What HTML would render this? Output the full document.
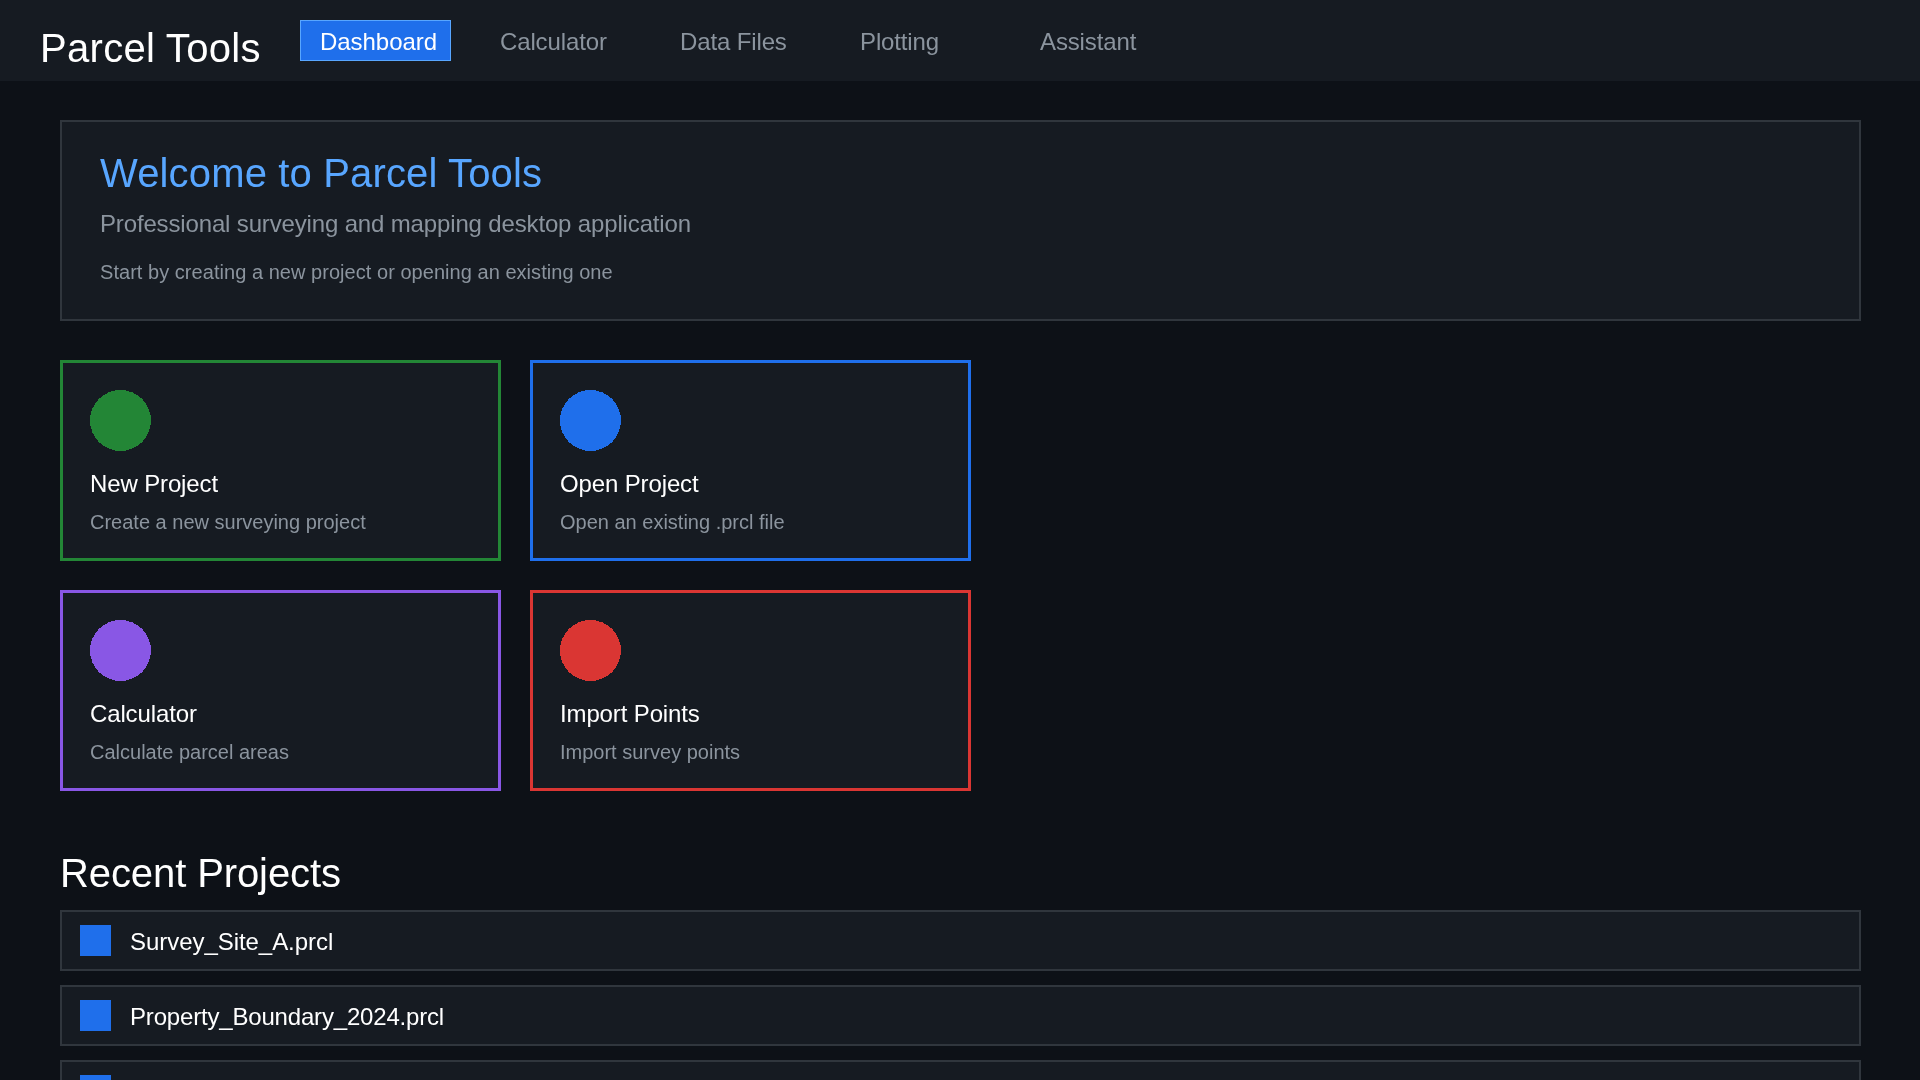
<!DOCTYPE html>
<html>
<head>
<meta charset="utf-8">
<style>
*{box-sizing:border-box;margin:0;padding:0}
.nav>div,.welcome>div,.card>div,.rp,.item>div{will-change:transform}
html,body{width:1920px;height:1080px;overflow:hidden}
body{background:#0d1117;font-family:"Liberation Sans",sans-serif;color:#e6edf3;position:relative}
.nav{position:absolute;left:0;top:0;width:1920px;height:81px;background:#161b22}
.brand{position:absolute;left:40px;top:24px;font-size:40px;letter-spacing:0.3px;line-height:48px;color:#ffffff;white-space:nowrap}
.nb{position:absolute;top:21px;height:41px;font-size:24px;line-height:41px;color:#8b949e;white-space:nowrap;letter-spacing:-0.13px}
.nb.active{top:20px;left:300px;width:151px;background:#1f6feb;border:1px solid #58a6ff;color:#ffffff;line-height:39px;padding-left:19px;padding-top:1px;letter-spacing:-0.05px}
.welcome{position:absolute;left:60px;top:120px;width:1801px;height:201px;background:#161b22;border:2px solid #30363d}
.wt{position:absolute;left:38px;top:27px;letter-spacing:0.15px;font-size:40px;line-height:48px;color:#58a6ff;white-space:nowrap}
.ws{position:absolute;left:38px;top:87px;letter-spacing:-0.15px;font-size:24px;line-height:30px;color:#8b949e;white-space:nowrap}
.wh{position:absolute;left:38px;top:138px;letter-spacing:0.04px;font-size:20px;line-height:24px;color:#8b949e;white-space:nowrap}
.card{position:absolute;width:441px;height:201px;background:#161b22;border:3px solid}
.card .c{position:absolute;left:27px;top:27px;width:61px;height:61px}
.card .t{position:absolute;left:27px;top:106px;letter-spacing:-0.13px;font-size:24px;line-height:30px;color:#ffffff;white-space:nowrap}
.card .d{position:absolute;left:27px;top:147px;font-size:20px;line-height:24px;color:#8b949e;white-space:nowrap}
.rp{position:absolute;left:60px;top:849px;letter-spacing:-0.1px;font-size:40px;line-height:48px;color:#ffffff;white-space:nowrap}
.item{position:absolute;left:60px;width:1801px;height:61px;background:#161b22;border:2px solid #30363d}
.item .sq{position:absolute;left:18px;top:13px;width:31px;height:31px;background:#1f6feb}
.item .n{position:absolute;left:68px;top:15px;letter-spacing:-0.18px;font-size:24px;line-height:30px;color:#ffffff;white-space:nowrap}
</style>
</head>
<body>
<div class="nav">
  <div class="brand">Parcel Tools</div>
  <div class="nb active">Dashboard</div>
  <div class="nb" style="left:500px">Calculator</div>
  <div class="nb" style="left:680px">Data Files</div>
  <div class="nb" style="left:860px">Plotting</div>
  <div class="nb" style="left:1040px">Assistant</div>
</div>
<div class="welcome">
  <div class="wt">Welcome to Parcel Tools</div>
  <div class="ws">Professional surveying and mapping desktop application</div>
  <div class="wh">Start by creating a new project or opening an existing one</div>
</div>
<div class="card" style="left:60px;top:360px;border-color:#238636"><svg class="c" width="61" height="61" viewBox="0 0 61 61"><circle cx="30.5" cy="30.5" r="30.5" fill="#238636" shape-rendering="crispEdges"/></svg><div class="t">New Project</div><div class="d">Create a new surveying project</div></div>
<div class="card" style="left:530px;top:360px;border-color:#1f6feb"><svg class="c" width="61" height="61" viewBox="0 0 61 61"><circle cx="30.5" cy="30.5" r="30.5" fill="#1f6feb" shape-rendering="crispEdges"/></svg><div class="t">Open Project</div><div class="d">Open an existing .prcl file</div></div>
<div class="card" style="left:60px;top:590px;border-color:#8957e5"><svg class="c" width="61" height="61" viewBox="0 0 61 61"><circle cx="30.5" cy="30.5" r="30.5" fill="#8957e5" shape-rendering="crispEdges"/></svg><div class="t">Calculator</div><div class="d">Calculate parcel areas</div></div>
<div class="card" style="left:530px;top:590px;border-color:#da3633"><svg class="c" width="61" height="61" viewBox="0 0 61 61"><circle cx="30.5" cy="30.5" r="30.5" fill="#da3633" shape-rendering="crispEdges"/></svg><div class="t">Import Points</div><div class="d">Import survey points</div></div>
<div class="rp">Recent Projects</div>
<div class="item" style="top:910px"><div class="sq"></div><div class="n" style="letter-spacing:-0.05px">Survey_Site_A.prcl</div></div>
<div class="item" style="top:985px"><div class="sq"></div><div class="n">Property_Boundary_2024.prcl</div></div>
<div class="item" style="top:1060px"><div class="sq"></div><div class="n">Downtown_Lot_15.prcl</div></div>
</body>
</html>
